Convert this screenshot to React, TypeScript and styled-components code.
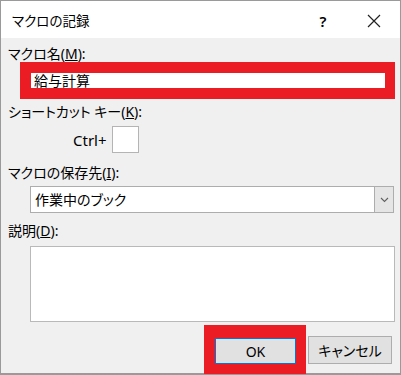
import styled, { createGlobalStyle } from 'styled-components'

const GlobalStyle = createGlobalStyle`
  html, body {
    margin: 0;
    padding: 0;
    background: #f0f0f0;
  }
  body {
    font-family: 'Noto Sans', 'Noto Sans CJK JP', sans-serif;
    font-feature-settings: 'palt';
    color: #000;
  }
`

const Dialog = styled.div`
  box-sizing: border-box;
  width: 401px;
  height: 375px;
  background: #f0f0f0;
  border: 1px solid #9a9a9a;
  border-bottom-width: 2px;
  display: flex;
  flex-direction: column;
`

const TitleBar = styled.div`
  height: 37px;
  background: #fff;
  display: flex;
  align-items: center;
  padding-left: 11px;
  flex-shrink: 0;
`

const Title = styled.div`
  flex: 1;
  font-size: 13.5px;
  line-height: 18px;
  margin-top: 2px;
`

const Help = styled.div`
  width: 20px;
  font-size: 15px;
  font-weight: 600;
  text-align: center;
  margin-right: 34px;
  margin-top: 2px;
`

const CloseBtn = styled.div`
  width: 14px;
  height: 14px;
  margin-right: 19px;
  margin-top: 2px;
  display: flex;
`

const Body = styled.div`
  flex: 1;
  display: flex;
  flex-direction: column;
  padding: 8px 0 0 7px;
`

const Label = styled.div<{ $gap?: number }>`
  font-size: 14px;
  line-height: 16px;
  height: 16px;
  margin-top: ${(p) => p.$gap ?? 0}px;
  white-space: nowrap;
`

const Highlight = styled.div`
  background: #ec1c24;
  box-sizing: border-box;
`

const NameBox = styled(Highlight)`
  margin-left: 12px;
  width: 375px;
  padding: 11px 10px 11px 11px;
`

const NameInput = styled.div`
  height: 15px;
  background: #fff;
  font-size: 14px;
  line-height: 15px;
  padding-left: 3px;
`

const ShortcutRow = styled.div`
  display: flex;
  align-items: center;
  margin-top: 6px;
  padding-left: 65px;
  gap: 5px;
`

const KeyText = styled.span`
  font-size: 15px;
`

const KeyBox = styled.div`
  box-sizing: border-box;
  width: 27px;
  height: 27px;
  background: #fff;
  border: 1px solid #b4b4b4;
`

const Combo = styled.div`
  box-sizing: border-box;
  margin: 5px 0 0 22px;
  width: 364px;
  height: 27px;
  background: #fff;
  border: 1px solid #adadad;
  display: flex;
  align-items: stretch;
`

const ComboText = styled.div`
  flex: 1;
  font-size: 14px;
  line-height: 25px;
  padding-left: 4px;
`

const ComboButton = styled.div`
  width: 18px;
  margin: -1px -1px -1px 0;
  background: #e5e5e5;
  border: 1px solid #adadad;
  display: flex;
  align-items: center;
  justify-content: center;
`

const Description = styled.div`
  box-sizing: border-box;
  margin: 7px 0 0 22px;
  width: 365px;
  height: 76px;
  background: #fff;
  border: 1px solid #b9b9b9;
`

const ButtonRow = styled.div`
  display: flex;
  justify-content: flex-end;
  align-items: center;
  gap: 2px;
  margin-top: 3px;
  padding-right: 8px;
`

const OkFrame = styled(Highlight)`
  width: 102px;
  height: 49px;
  padding: 13px 10px 10px 11px;
`

const Button = styled.div<{ $primary?: boolean }>`
  box-sizing: border-box;
  width: ${(p) => (p.$primary ? 81 : 84)}px;
  height: ${(p) => (p.$primary ? 26 : 28)}px;
  background: #e1e1e1;
  border: 1px solid ${(p) => (p.$primary ? '#0078d7' : '#adadad')};
  font-size: 14px;
  display: flex;
  align-items: center;
  justify-content: center;
`

export default function App() {
  return (
    <Dialog>
      <GlobalStyle />
      <TitleBar>
        <Title>マクロの記録</Title>
        <Help>?</Help>
        <CloseBtn>
          <svg width="14" height="14" viewBox="0 0 14 14">
            <path d="M1 1 L13 13 M13 1 L1 13" stroke="#222" strokeWidth="1.2" fill="none" />
          </svg>
        </CloseBtn>
      </TitleBar>
      <Body>
        <Label>
          マクロ名(<u>M</u>):
        </Label>
        <NameBox>
          <NameInput>給与計算</NameInput>
        </NameBox>
        <Label $gap={5}>
          ショートカット キー(<u>K</u>):
        </Label>
        <ShortcutRow>
          <KeyText>Ctrl+</KeyText>
          <KeyBox />
        </ShortcutRow>
        <Label $gap={12}>
          マクロの保存先(<u>I</u>):
        </Label>
        <Combo>
          <ComboText>作業中のブック</ComboText>
          <ComboButton>
            <svg width="9" height="6" viewBox="0 0 9 6">
              <path d="M1 1 L4.5 4.5 L8 1" stroke="#606060" strokeWidth="1.1" fill="none" />
            </svg>
          </ComboButton>
        </Combo>
        <Label $gap={10}>
          説明(<u>D</u>):
        </Label>
        <Description />
        <ButtonRow>
          <OkFrame>
            <Button $primary>OK</Button>
          </OkFrame>
          <Button>キャンセル</Button>
        </ButtonRow>
      </Body>
    </Dialog>
  )
}
